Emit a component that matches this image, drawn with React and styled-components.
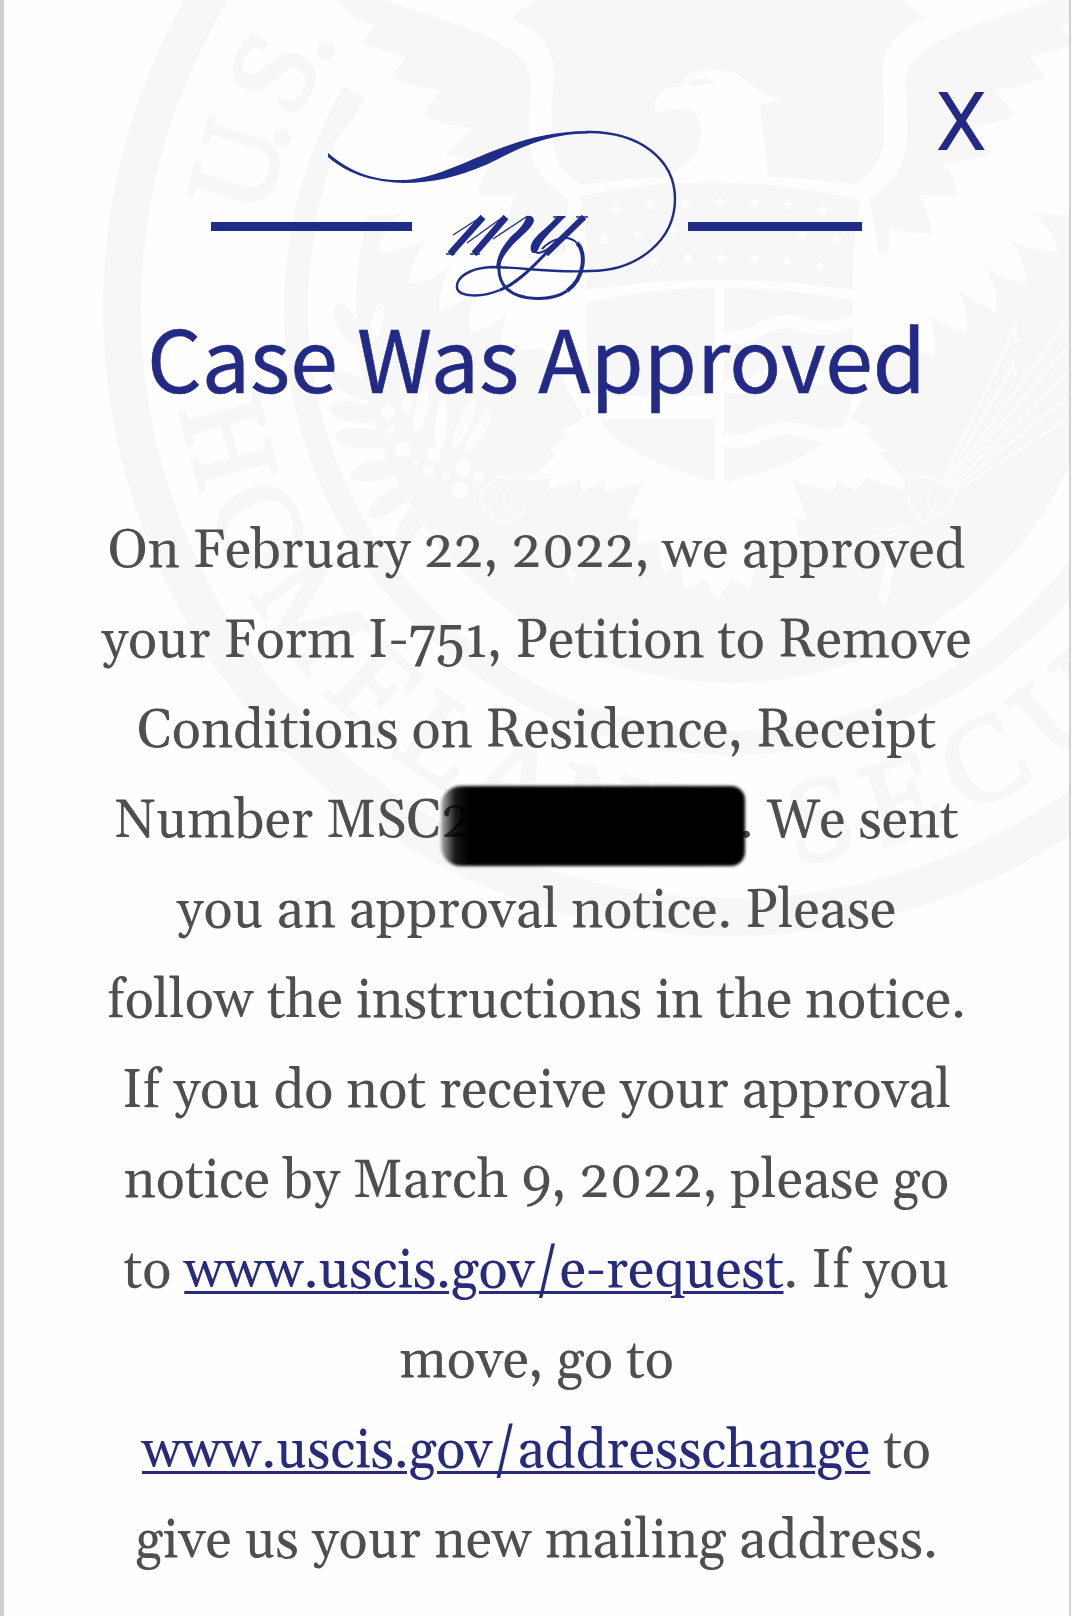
import styled, { createGlobalStyle } from 'styled-components';

const GlobalStyle = createGlobalStyle`
    * {
        box-sizing: border-box;
    }

    body {
        margin: 0;
        background-color: #cfcfcf;
    }
`;

// letters of the seal: [glyph, degrees from the left-hand side of the ring]
const upperLetters = [['U', 16.2], ['.', 20.9], ['S', 27.4], ['.', 32.6]];
const lowerLetters = [
    ['H', 14.8], ['O', 25], ['M', 36], ['E', 47], ['L', 56.3], ['A', 65.5], ['N', 75.5], ['D', 86],
    ['S', 100], ['E', 109.4], ['C', 119.3], ['U', 130], ['R', 141],
];

const stars = [
    [616, 209], [650, 205], [686, 203], [720, 202], [754, 203], [788, 205], [823, 210],
    [604, 239], [638, 234], [672, 231], [802, 235], [837, 239],
    [620, 266], [654, 262], [688, 259], [721, 258], [754, 259], [787, 261], [820, 266],
];

const berries = [[388, 412, 7], [403, 450, 8], [391, 430, 4], [434, 454, 7], [429, 471, 6], [463, 468, 8], [460, 490, 8], [479, 477, 5], [446, 475, 4], [416, 462, 3]];

// [x, y, rotation, length]
const outerLeaves = [[348, 325, 62, 46], [352, 385, 28, 50], [354, 412, 10, 50], [362, 438, 4, 54], [378, 470, -12, 56], [392, 500, -35, 56], [412, 522, -58, 54], [448, 530, -84, 56]];
const innerLeaves = [[377, 322, -78, 40], [421, 410, -78, 46], [441, 424, -86, 50], [464, 424, -66, 52], [478, 432, -58, 44], [406, 396, 86, 34]];

const Wing = () => (
    <g>
        <path
            fill='#fefefe'
            d='M1150 0 H900 L925 18 C905 26 882 42 882 75 C884 100 886 120 883 145 C880 165 866 180 848 187
            L850 420 L890 350 Q910 345 934 357 Q938 335 928 314 Q945 328 966 333 Q970 312 958 288 Q974 304 996 311
            Q1000 290 983 264 Q1000 280 1027 284 Q1026 262 1010 240 Q1034 252 1058 252 Q1052 226 1031 212
            Q1050 217 1075 215 L1120 217 L1100 140 L1068 100 L1090 88 L1150 40 Z'
        />
        <path
            d='M1051 0 C1010 15 980 22 950 36 C920 50 905 64 905 84 C907 110 908 130 906 148 C902 172 890 185 867 200
            V252 Q880 257 888 253 Q890 240 889 226 Q908 234 931 233 Q930 210 918 195 H958 Q956 178 944 164
            L990 155 L963 128 Q994 126 1014 115 L995 90 Q1025 87 1045 77 L1030 57 L1074 44 L1061 25 Q1085 20 1096 0 Z'
        />
    </g>
);

const Seal = () => (
    <SealArt viewBox='0 0 1065 1616' aria-hidden='true'>
        <g transform='translate(-4 0)'>
            <circle cx='730' cy='309' r='608' fill='none' stroke='#f7f7f7' strokeWidth='38' />
            <circle cx='730' cy='309' r='434' fill='none' stroke='#f7f7f7' strokeWidth='24' />
            <circle cx='730' cy='309' r='374' />
            {outerLeaves.map(([x, y, turn, size]) => (
                <ellipse key={`${x}-${y}`} rx={size / 2} ry='10' transform={`translate(${x} ${y}) rotate(${turn})`} />
            ))}

            <Wing />
            <g transform='translate(1436 0) scale(-1 1)'>
                <Wing />
            </g>

            {/* body, legs and tail */}
            <path
                fill='#fefefe'
                d='M569 186 Q720 165 867 186 L880 260 L884 345 L850 418 L873 430 L866 434 L888 450 L880 453 L904 478
                L905 491 L866 478 L856 491 L838 481 L832 492 L792 480 L808 522 L795 517 L800 545 L780 540 L775 572
                L755 565 L750 590 L732 578 L718 600 L705 580 L685 590 L680 565 L663 572 L658 540 L636 545 L640 518
                L628 520 Q632 500 645 482 L606 492 L604 481 L582 492 L580 480 L546 491 L552 478 L530 480 L555 455
                L550 450 L569 435 L562 430 L592 414 L560 345 Z'
            />
            <path
                fill='#fefefe'
                d='M656 113 C652 96 662 86 686 86 C680 74 696 70 716 70 C738 70 745 80 760 91 Q770 97 783 98
                Q770 104 760 104 C762 135 767 150 769 190 H640 Q680 172 692 158 C704 142 705 124 694 113 Q678 104 656 113 Z'
            />
            <path d='M688 82 Q702 75 716 83 Q702 84 690 87 Z' />

            {/* shield */}
            <path d='M581 196 Q718 167 860 200 Q852 250 853 290 Q718 270 586 290 Q588 240 581 196 Z' />
            <path d='M586 303 Q650 288 714 288 V396 H592 Q584 350 586 303 Z' />
            <path d='M599 419 H715 V482 Q620 456 599 419 Z' />
            <path d='M724 288 Q790 288 853 301 V350 Q854 390 848 418 Q820 462 724 482 Z' />
            <g fill='none' stroke='#fefefe' strokeWidth='13'>
                <path d='M724 335 C750 345 760 322 785 322 S820 338 858 318' />
                <path d='M724 385 C750 395 760 372 785 372 S820 388 858 368' />
                <path d='M724 438 C750 450 760 428 785 428 S820 444 846 432' />
            </g>
            {stars.map(([x, y]) => (
                <path
                    key={`${x}-${y}`}
                    fill='#fefefe'
                    transform={`translate(${x} ${y})`}
                    d='M0 -6 L1.5 -2 H6 L2.5 1 L3.5 5 L0 3 L-3.5 5 L-2.5 1 L-6 -2 H-1.5 Z'
                />
            ))}

            {/* olive branch and arrows */}
            <g fill='#fdfdfd'>
                {innerLeaves.map(([x, y, turn, size]) => (
                    <ellipse key={`${x}-${y}`} rx={size / 2} ry='6' transform={`translate(${x} ${y}) rotate(${turn})`} />
                ))}
                {berries.map(([x, y, r]) => (
                    <circle key={`${x}-${y}`} cx={x} cy={y} r={r} />
                ))}
                <path d='M527 506 L576 575 L570 581 L564 562 Z' />
                <path d='M878 600 L890 545 L898 550 L886 606 Z' />
            </g>
            <g fill='none' stroke='#fcfcfc' strokeWidth='2.5'>
                <path d='M543 474 Q510 480 500 476 Q488 484 482 492 Q476 505 490 508 Q490 525 506 520 Q520 524 524 506 M505 492 Q500 504 512 510' />
                <path d='M904 478 Q930 474 944 484 Q962 490 952 500 Q950 515 938 512 Q920 530 916 512 Q902 500 914 492 M930 492 Q924 506 934 510' />
                <path d='M942 482 L1015 330 M944 484 L1012 368 M946 484 L1064 325 M948 486 L1066 348 M950 488 L1066 374 M952 490 L1066 398 M954 492 L1066 420' />
                <path d='M905 525 L850 545 M910 528 L840 556 M914 530 L870 556' />
            </g>
            <path fill='#fcfcfc' d='M1016 322 L1019 343 L1007 337 Z M1014 360 L1017 376 L1006 370 Z' />

            <Lettering>
                {upperLetters.map(([letter, angle]) => (
                    <text key={angle} y='-474' transform={`translate(730 309) rotate(${angle - 90})`}>{letter}</text>
                ))}
                {lowerLetters.map(([letter, angle]) => (
                    <text key={angle} y='558' transform={`translate(730 309) rotate(${90 - angle})`}>{letter}</text>
                ))}
            </Lettering>
        </g>
    </SealArt>
);

const Logo = () => (
    <LogoArt viewBox='211 120 651 180' role='img' aria-label='my'>
        <path fill='#1f2d89' d='M211 222 H412 V231 H211 Z M688 222 H862 V231 H688 Z' />
        <path
            fill='#1f2d89'
            d='M328 153 C352 174 378 181 405 180 C455 178 505 131 588 131 V133.5 C545 134 518 149 488 164
            C458 177 432 183 404 183 C376 182 350 176 328 157 Z'
        />
        <g fill='none' stroke='#1f2d89'>
            <path strokeWidth='2.4' d='M586 132 C640 131 675 160 675 199 C675 240 638 271 590 271 C550 273 520 267 492 267 C468 268 456 278 457 288 C459 297 481 298 500 290' />
            <path strokeWidth='3' d='M500 290 C516 284 532 268 549 250' />
            <path strokeWidth='6' d='M584 217 L546 254' />
            <path strokeWidth='1.4' d='M453 235 L481 217 M467 243 L503 217 M493 239 L526 217' />
            <path strokeWidth='6.5' d='M483 217 L450 254 M506 217 L474 254' />
            <path strokeWidth='3' d='M516 234 C496 252 495 276 506 288 C520 302 552 301 567 291' />
            <path strokeWidth='4' d='M567 291 C586 277 586 251 577 243' />
            <path strokeWidth='2' d='M577 243 C567 233 550 240 542 249' />
            <path strokeWidth='2.2' d='M534 251 C540 257 551 247 560 239' />
            <path strokeWidth='1.4' d='M446 254 H455 M470 254 H480 M553 217 H565 M576 217 H588' />
        </g>
        <path
            fill='#1f2d89'
            d='M526 216 Q534 215 534 221 C532 229 518 238 510 248 C504 255 500 262 499 270 L496 268 C497 254 504 244 512 236
            C519 229 526 223 526 216 Z
            M557 216 H566 C556 227 543 237 538 250 Q534 256 531 251 C528 238 548 229 557 216 Z'
        />
    </LogoArt>
);

const App = () => {
    return (
        <Card>
            <GlobalStyle />
            <Seal />

            <Header>
                <Logo />
                <CloseButton type='button'>X</CloseButton>
            </Header>

            <Heading>Case Was Approved</Heading>

            <Message>
                <Line>On February 22, 2022, we approved</Line>
                <Line>your Form I-751, Petition to Remove</Line>
                <Line>Conditions on Residence, Receipt</Line>
                <Line>Number MSC<Redacted>2</Redacted>. We sent</Line>
                <Line>you an approval notice. Please</Line>
                <Line>follow the instructions in the notice.</Line>
                <Line>If you do not receive your approval</Line>
                <Line>notice by March 9, 2022, please go</Line>
                <Line>to <Link href='#e-request'>www.uscis.gov/e-request</Link>. If you</Line>
                <Line>move, go to</Line>
                <Line><Link href='#addresschange'>www.uscis.gov/addresschange</Link> to</Line>
                <Line>give us your new mailing address.</Line>
            </Message>
        </Card>
    );
};

const Card = styled.main`
    position: relative;
    isolation: isolate;
    display: flex;
    flex-direction: column;
    align-items: center;
    height: 1616px;
    margin: 0 2px 0 4px;
    overflow: hidden;
    background-color: #fefefe;
`;

const SealArt = styled.svg`
    position: absolute;
    inset: 0;
    z-index: -1;
    width: 1065px;
    height: 1616px;
    fill: #f7f7f7;
`;

const Lettering = styled.g`
    font-family: 'Liberation Serif', serif;
    font-size: 120px;
    text-anchor: middle;
    stroke: #f7f7f7;
    stroke-width: 4px;
`;

const Header = styled.header`
    display: grid;
    grid-template-columns: 1fr 651px 1fr;
    width: 100%;
    height: 300px;
    padding-top: 81px;
`;

const LogoArt = styled.svg`
    grid-column: 2;
    align-self: end;
    width: 651px;
    height: 180px;
`;

const CloseButton = styled.button`
    justify-self: end;
    align-self: start;
    margin-right: 82px;
    padding: 0;
    border: 0;
    background: none;
    color: #232a86;
    font-family: Roboto, sans-serif;
    font-size: 82px;
    line-height: 82px;
    cursor: pointer;
`;

const Heading = styled.h1`
    margin: 13px 0 0;
    color: #232a86;
    font-family: 'Noto Sans CJK SC', sans-serif;
    font-size: 85.8px;
    font-weight: 400;
    line-height: 86px;
    white-space: nowrap;
    -webkit-text-stroke: 0.6px #232a86;
`;

const Message = styled.p`
    margin: 107px 0 0;
    color: #4f4f4f;
    font-family: Gelasio, 'Liberation Serif', serif;
    font-size: 54px;
    font-variant-numeric: oldstyle-nums;
    line-height: 90px;
    text-align: center;
    white-space: nowrap;
`;

const Line = styled.span`
    display: block;
`;

const Link = styled.a`
    color: #262b7c;
    text-decoration: underline;
    text-decoration-thickness: 3px;
    text-underline-offset: 4px;
`;

const Redacted = styled.span`
    position: relative;
    display: inline-block;
    width: 298px;
    text-align: left;

    &::after {
        content: '';
        position: absolute;
        top: 10px;
        left: 0;
        width: 304px;
        height: 80px;
        border-radius: 20px 14px 14px 20px;
        background: linear-gradient(to right, rgba(0, 0, 0, 0.3), rgba(0, 0, 0, 0.9) 14px, #000 28px);
        filter: blur(1.5px);
    }
`;

export default App;
